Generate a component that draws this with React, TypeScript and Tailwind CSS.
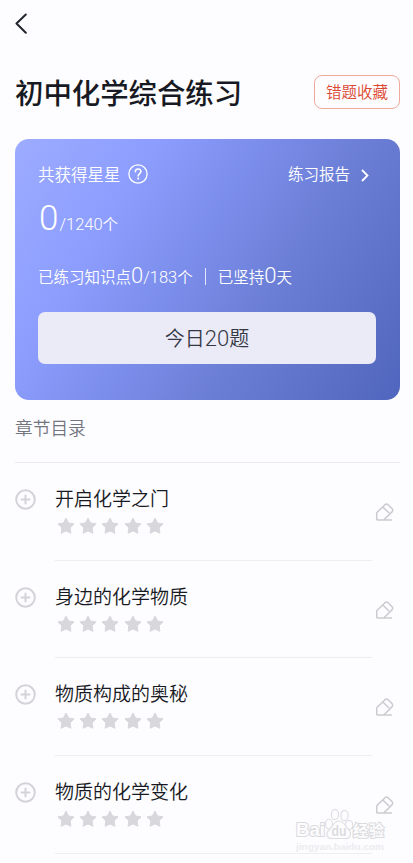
import React from "react";

const chapters = ["开启化学之门", "身边的化学物质", "物质构成的奥秘", "物质的化学变化"];

function Star() {
  return (
    <svg width="18" height="18" viewBox="0 0 18 18" className="shrink-0" fill="#d7d7dc" stroke="#d7d7dc" strokeWidth="1" strokeLinejoin="round">
      <path d="M9 1.1 L11.5 6 L17 6.900 L13.1 10.8 L13.9 16.3 L9 13.900 L4.1 16.3 L4.9 10.8 L1 6.900 L6.5 6 Z" />
    </svg>
  );
}

function PlusCircle() {
  return (
    <svg width="21" height="21" viewBox="0 0 21 21" className="mt-[26px] shrink-0" fill="none" stroke="#d3d3d8" strokeWidth="2" strokeLinecap="round">
      <circle cx="10.5" cy="10.5" r="9.3" />
      <path d="M10.5 6.5 V14.5 M6.5 10.5 H14.5" />
    </svg>
  );
}

function Pencil() {
  return (
    <svg width="20" height="20" viewBox="0 0 20 20" className="mt-[39px] shrink-0" fill="none" stroke="#cbcbcf" strokeWidth="1.5" strokeLinejoin="round" strokeLinecap="round">
      <path d="M16.500 18 H2.400 Q1.700 18 1.700 17.300 V11.300 Q1.700 10.700 2.200 10.200 L10 2.700 Q11.600 1.400 13.100 2.700 L17.200 6.800 Q18.300 8.300 17.200 9.600 L9 17.800" />
      <path d="M8.300 5.500 L13.800 10.700" />
    </svg>
  );
}

function Watermark() {
  return (
    <svg className="absolute left-[292px] top-[805px]" width="100" height="48" viewBox="0 0 100 48">
      <g fill="#fdfcfe" stroke="#dfdfe3" strokeWidth="1.2">
        <ellipse cx="37" cy="19" rx="3.5" ry="5" />
        <ellipse cx="43" cy="9.500" rx="3.6" ry="5.2" />
        <ellipse cx="52.500" cy="10.500" rx="3.6" ry="5.2" />
        <ellipse cx="57" cy="20" rx="3.8" ry="4.6" />
        <path d="M47 16 C52 16 53 21 57 25 C60 29 58 34 53 33.500 H41 C35 34 33 29 37 25 C41 21 42 16 47 16 Z" />
      </g>
      <g fontFamily='"Liberation Sans", "Noto Sans CJK SC", sans-serif' fill="#fdfcfe" stroke="#dadadd" strokeWidth="2" paintOrder="stroke" fontWeight="700">
        <text x="4" y="31" fontSize="19" textLength="29" lengthAdjust="spacingAndGlyphs">Bai</text>
        <text x="39.500" y="30.500" fontSize="14" textLength="15" lengthAdjust="spacingAndGlyphs" fill="#dcdcdf" stroke="none">du</text>
        <text x="61" y="30.500" fontSize="15" textLength="31">经验</text>
        <text x="4" y="44.500" fontSize="9.500" fill="#ececef" stroke="none" textLength="88" lengthAdjust="spacingAndGlyphs">jingyan.baidu.com</text>
      </g>
    </svg>
  );
}

export default function App() {
  return (
    <main className="relative h-[863px] w-[413px] overflow-hidden whitespace-nowrap bg-[#fdfcfe] px-[15px] font-['Noto_Sans_CJK_SC',sans-serif] text-[#171a23]">
      <header>
        <div className="flex h-[46px] items-center">
          <svg width="12" height="22" viewBox="0 0 12 22" fill="none" stroke="#22252c" strokeWidth="2" strokeLinejoin="round" strokeLinecap="round">
            <path d="M10.800 2.500 L1.500 11.500 L10.800 20.700" />
          </svg>
        </div>
        <div className="flex h-[93px] items-center justify-between">
          <h1 className="text-[28.400px] font-medium leading-none">初中化学综合练习</h1>
          <button className="mr-[-2px] mt-[-2px] h-[34px] w-[86px] rounded-[8px] border border-[#efaa9d] text-[15.500px] font-[350] leading-none text-[#dc4932]">错题收藏</button>
        </div>
      </header>

      <section className="mr-[-2px] flex h-[261px] flex-col rounded-[14px] bg-[linear-gradient(122deg,#9dacff_0%,#8c9dfe_26%,#7b8dea_46%,#6b7ed5_65%,#5065bd_100%)] px-[23px] pt-[22px] font-[350] text-white">
        <div className="flex h-[26px] items-center justify-between">
          <div className="flex items-center gap-[7px] text-[16.500px] leading-none">
            <span>共获得星星</span>
            <svg width="20" height="20" viewBox="0 0 20 20" className="mt-[-1px]" fill="none" stroke="white" strokeWidth="1.300" strokeLinecap="round">
              <circle cx="10" cy="10" r="9.100" />
              <path d="M7.300 7.700 C7.300 4 12.900 4.200 12.900 7.500 C12.900 9.500 10.200 9.700 10.200 12" strokeWidth="1.600" />
              <circle cx="10.200" cy="14.600" r=".45" fill="white" />
            </svg>
          </div>
          <div className="mr-[8px] flex items-center gap-[11px] text-[15.500px] leading-none">
            <span>练习报告</span>
            <svg width="8" height="14" viewBox="0 0 8 14" className="mt-[1px]" fill="none" stroke="white" strokeWidth="1.800"><path d="M1 2 L6.500 7.500 L1 13" /></svg>
          </div>
        </div>
        <div className="flex h-[48px] items-baseline">
          <span className="ml-[1px] font-['Roboto',sans-serif] text-[35px] font-[350] leading-[64px]">0</span>
          <span className="ml-[1px] text-[15.500px] leading-none"><span className="font-['Roboto',sans-serif] text-[16.500px] font-[350]">/1240</span>个</span>
        </div>
        <div className="mt-[20px] flex h-[42px] items-center text-[15.500px] leading-none">
          <div className="flex items-baseline">
            <span>已练习知识点</span>
            <span className="font-['Roboto',sans-serif] text-[22px] font-[350]">0</span>
            <span className="font-['Roboto',sans-serif] text-[16.500px] font-[350]">/183</span>
            <span>个</span>
          </div>
          <i className="mx-[12px] h-[17px] w-px bg-white/80" />
          <div className="flex items-baseline"><span>已坚持</span><span className="font-['Roboto',sans-serif] text-[22px] font-[350]">0</span><span>天</span></div>
        </div>
        <button className="mt-[15px] h-[52px] w-[338px] rounded-[7px] bg-[#ebeaf7] pt-[1px] text-[20px] font-[350] leading-none text-[#343845]">今日<span className="font-['Roboto',sans-serif] text-[22px] font-[350]">20</span>题</button>
      </section>

      <h2 className="flex h-[62px] items-center pb-[7px] text-[17.700px] font-[350] leading-none text-[#73757f]">章节目录</h2>
      <section className="mr-[-2px] border-t border-[#ebebef]">
        {chapters.map((name) => (
          <div key={name} className="flex h-[97.670px]">
            <PlusCircle />
            <div className="ml-[19px] w-[317px] border-b border-[#eeeef1] pt-[24px]">
              <h3 className="text-[19px] font-[350] leading-[21px]">{name}</h3>
              <div className="ml-[2px] mt-[9px] flex gap-[4.200px]">
                {[0, 1, 2, 3, 4].map((n) => <Star key={n} />)}
              </div>
            </div>
            <div className="ml-[3px]"><Pencil /></div>
          </div>
        ))}
      </section>
      <Watermark />
    </main>
  );
}
